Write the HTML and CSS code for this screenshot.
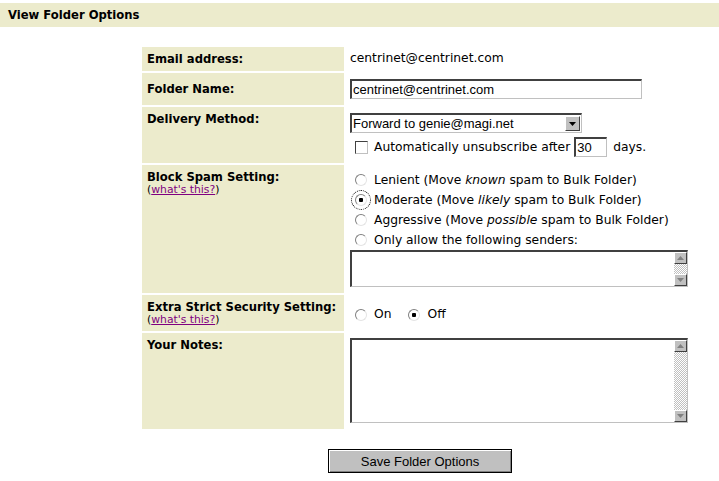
FILE: index.html
```html
<!DOCTYPE html>
<html lang="en">
<head>
    <meta charset="UTF-8">
    <title>View Folder Options</title>
    <link rel="stylesheet" href="styles.css">
</head>
<body>
    <div class="page-title">View Folder Options</div>

    <form class="folder-form" onsubmit="return false;">
        <table class="options">
            <tr class="row-mid">
                <th>Email address:</th>
                <td>centrinet@centrinet.com</td>
            </tr>
            <tr class="row-mid">
                <th>Folder Name:</th>
                <td><input type="text" class="text-field folder-name" value="centrinet@centrinet.com"></td>
            </tr>
            <tr>
                <th>Delivery Method:</th>
                <td>
                    <div class="select-box">
                        <select>
                            <option>Forward to genie@magi.net</option>
                        </select>
                        <span class="drop-btn">
                            <svg width="7" height="4" viewBox="0 0 7 4"><path d="M0 0h7L3.5 4z" fill="#000"/></svg>
                        </span>
                    </div>
                    <div class="check-line">
                        <input type="checkbox" class="check">
                        <span>Automatically unsubscribe after</span>
                        <input type="text" class="text-field days" value="30">
                        <span class="days-label">days.</span>
                    </div>
                </td>
            </tr>
            <tr>
                <th>
                    Block Spam Setting:
                    <div class="help">(<a href="#">what's this?</a>)</div>
                </th>
                <td>
                    <label class="radio-line"><input type="radio" name="spam" class="radio"><span>Lenient (Move <i>known</i> spam to Bulk Folder)</span></label>
                    <label class="radio-line"><input type="radio" name="spam" class="radio focused" checked><span>Moderate (Move <i>likely</i> spam to Bulk Folder)</span></label>
                    <label class="radio-line"><input type="radio" name="spam" class="radio"><span>Aggressive (Move <i>possible</i> spam to Bulk Folder)</span></label>
                    <label class="radio-line"><input type="radio" name="spam" class="radio"><span>Only allow the following senders:</span></label>
                    <div class="memo-box senders">
                        <textarea></textarea>
                        <div class="scroll">
                            <span class="scroll-btn"><svg width="7" height="4" viewBox="0 0 7 4"><path d="M3.5 0L7 4H0z" fill="#808080"/></svg></span>
                            <span class="scroll-track"></span>
                            <span class="scroll-btn"><svg width="7" height="4" viewBox="0 0 7 4"><path d="M0 0h7L3.5 4z" fill="#808080"/></svg></span>
                        </div>
                    </div>
                </td>
            </tr>
            <tr>
                <th>
                    Extra Strict Security Setting:
                    <div class="help">(<a href="#">what's this?</a>)</div>
                </th>
                <td>
                    <div class="radio-line strict-line">
                        <label class="inline-radio"><input type="radio" name="strict" class="radio"><span>On</span></label>
                        <label class="inline-radio"><input type="radio" name="strict" class="radio" checked><span>Off</span></label>
                    </div>
                </td>
            </tr>
            <tr>
                <th>Your Notes:</th>
                <td>
                    <div class="memo-box notes">
                        <textarea></textarea>
                        <div class="scroll">
                            <span class="scroll-btn"><svg width="7" height="4" viewBox="0 0 7 4"><path d="M3.5 0L7 4H0z" fill="#808080"/></svg></span>
                            <span class="scroll-track"></span>
                            <span class="scroll-btn"><svg width="7" height="4" viewBox="0 0 7 4"><path d="M0 0h7L3.5 4z" fill="#808080"/></svg></span>
                        </div>
                    </div>
                </td>
            </tr>
        </table>

        <div class="actions">
            <button type="submit" class="save-btn">Save Folder Options</button>
        </div>
    </form>
</body>
</html>
```

FILE: styles.css
```css
body {
    margin: 0;
    font-family: "DejaVu Sans", Verdana, sans-serif;
    font-size: 12.3px;
    color: #000;
    background: #fff;
}

.page-title {
    margin-top: 3px;
    height: 24px;
    line-height: 24px;
    padding-left: 8px;
    background: #ecebcc;
    font-size: 11.6px;
    font-weight: bold;
}

.options {
    margin: 18px 0 0 140px;
    width: 560px;
    border-collapse: separate;
    border-spacing: 2px;
}

.options th {
    width: 192px;
    padding: 6px 5px 5px;
    background: #ecebcc;
    text-align: left;
    vertical-align: top;
    line-height: 13px;
    font-size: 11.6px;
    font-weight: bold;
    white-space: nowrap;
}

.options td {
    padding: 5px 4px 6px;
    vertical-align: middle;
    line-height: 13px;
}

.options .row-mid th {
    vertical-align: middle;
}

.help {
    font-size: 10.8px;
    line-height: 12px;
    font-weight: normal;
}

.help a {
    color: #800080;
}

/* form controls, win classic look */
.text-field {
    box-sizing: border-box;
    height: 20px;
    padding: 0 1px;
    border-style: solid;
    border-width: 2px 1px 1px 2px;
    border-color: #404040 #c0c0c0 #c0c0c0 #404040;
    font-family: "Liberation Sans", Arial, sans-serif;
    font-size: 13px;
    outline: none;
}

.folder-name {
    display: block;
    width: 292px;
    margin-top: 1px;
}

.select-box {
    display: flex;
    box-sizing: border-box;
    width: 232px;
    height: 20px;
    margin-top: 1px;
    border-style: solid;
    border-width: 2px 1px 1px 2px;
    border-color: #404040 #c0c0c0 #c0c0c0 #404040;
    background: #fff;
}

.select-box select {
    flex: 1;
    appearance: none;
    border: none;
    padding: 0 1px;
    background: #fff;
    font-family: "Liberation Sans", Arial, sans-serif;
    font-size: 13px;
    color: #000;
    outline: none;
}

.drop-btn {
    display: flex;
    align-items: center;
    justify-content: center;
    box-sizing: border-box;
    width: 15px;
    height: 15px;
    margin: 1px 1px 0 0;
    background: #c0c0c0;
    border: 1px solid;
    border-color: #fff #404040 #404040 #fff;
}

.check-line {
    display: flex;
    align-items: center;
    height: 20px;
    margin-top: 4px;
}

.check {
    appearance: none;
    box-sizing: border-box;
    width: 13px;
    height: 13px;
    margin: 0 6px 0 5px;
    background: #fff;
    border: 1px solid;
    border-color: #404040 #c0c0c0 #c0c0c0 #404040;
}

.days {
    width: 33px;
    margin-left: 4px;
}

.days-label {
    margin-left: 6px;
}

.radio-line {
    display: flex;
    align-items: center;
    height: 20px;
}

.strict-line {
    margin-top: 4px;
}

.inline-radio {
    display: flex;
    align-items: center;
    margin-right: 17px;
}

.radio {
    appearance: none;
    box-sizing: border-box;
    width: 12px;
    height: 12px;
    margin: 0 7px 0 5px;
    border-radius: 50%;
    border: 1px solid;
    border-color: #808080 #e4e4e4 #e4e4e4 #808080;
    background: #fff;
}

.radio:checked {
    background: radial-gradient(circle, #000 0 2px, #fff 2.5px);
}

.inline-radio + .inline-radio .radio {
    margin-left: 0;
}

.radio.focused {
    outline: 1px dotted #000;
    outline-offset: 3px;
}

.memo-box {
    display: flex;
    box-sizing: border-box;
    width: 338px;
    border-style: solid;
    border-width: 2px 1px 1px 2px;
    border-color: #404040 #c0c0c0 #c0c0c0 #404040;
    background: #fff;
}

.memo-box.senders {
    height: 37px;
}

.memo-box.notes {
    height: 85px;
}

.memo-box textarea {
    flex: 1;
    border: none;
    resize: none;
    outline: none;
    padding: 1px 2px;
    font-family: "Liberation Sans", Arial, sans-serif;
    font-size: 13px;
}

.scroll {
    display: flex;
    flex-direction: column;
    width: 13px;
}

.scroll-btn {
    display: flex;
    align-items: center;
    justify-content: center;
    box-sizing: border-box;
    height: 12px;
    background: #c0c0c0;
    border: 1px solid;
    border-color: #fff #404040 #404040 #fff;
}

.scroll-track {
    flex: 1;
    background: repeating-conic-gradient(#c0c0c0 0 25%, #fff 0 50%) 0 0 / 2px 2px;
}

.actions {
    width: 560px;
    margin: 18px 0 0 140px;
    text-align: center;
}

.save-btn {
    width: 184px;
    height: 24px;
    background: #c0c0c0;
    border: 1px solid #000;
    box-shadow: inset 1px 1px 0 #fff, inset -1px -1px 0 #808080;
    font-family: "Liberation Sans", Arial, sans-serif;
    font-size: 13px;
    color: #000;
    padding: 0;
}
```
